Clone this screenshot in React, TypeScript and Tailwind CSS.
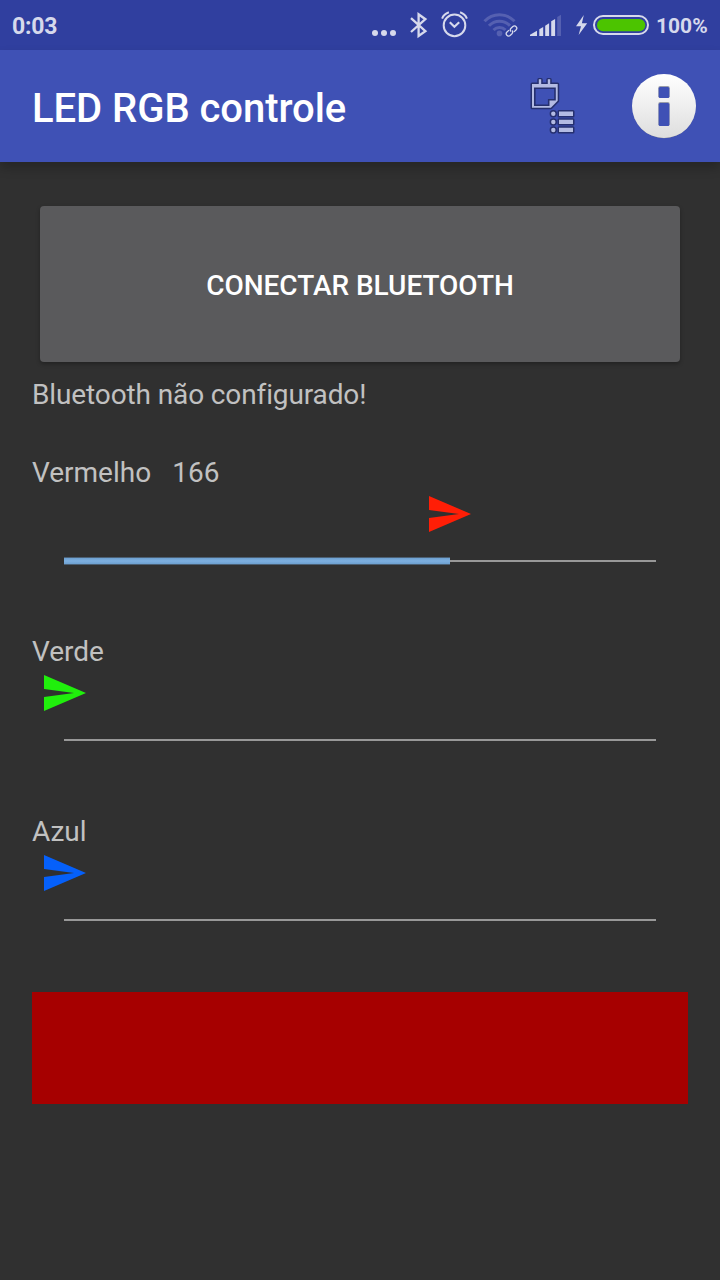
const BAR_ICON = '#d6d9ec';

function Dots() {
  return (
    <svg width="26" height="50" viewBox="371 0 26 50" fill={BAR_ICON}>
      <circle cx="375" cy="33" r="3" />
      <circle cx="384" cy="33" r="3" />
      <circle cx="393" cy="33" r="3" />
    </svg>
  );
}

function Bluetooth() {
  return (
    <svg width="18" height="50" viewBox="410 0 18 50" fill="none" stroke={BAR_ICON} strokeWidth="2.3">
      <path d="M411 18.2L425.4 31.2L418.6 36V14.2L425.4 19.2L411 32" />
    </svg>
  );
}

function Alarm() {
  return (
    <svg width="28" height="50" viewBox="441 0 28 50" fill="none" stroke={BAR_ICON}>
      <circle cx="454.5" cy="25.4" r="10.8" strokeWidth="2" />
      <path d="M449.8 22.2L454.4 26.8L459.2 22.2" strokeWidth="2.1" />
      <path d="M442.1 18.6Q443.8 14.1 448.9 12.3M466.9 18.6Q465.2 14.1 460.1 12.3" strokeWidth="2" />
    </svg>
  );
}

function Wifi() {
  return (
    <svg width="35" height="50" viewBox="483 0 35 50" fill="none">
      <g stroke="#5560b1" strokeWidth="3">
        <path d="M484.5 21.3A20.5 20.5 0 0 1 514.5 21.3" />
        <path d="M489 25.8A14.2 14.2 0 0 1 510 25.8" />
        <path d="M493.5 30A8.4 8.4 0 0 1 505.5 30" />
      </g>
      <circle cx="499.5" cy="33.4" r="2.8" fill="#5560b1" />
      <g transform="translate(511.5 31) rotate(-43)" stroke="#303f9f" strokeWidth="4">
        <rect x="-6.3" y="-2.1" width="12.6" height="4.2" rx="2.1" />
      </g>
      <g transform="translate(511.5 31) rotate(-43)" stroke={BAR_ICON} strokeWidth="1.3">
        <path d="M-1.2 -2.3H-4A2.3 2.3 0 0 0 -4 2.3H-1.5A2.3 2.3 0 0 0 .7 0" />
        <path d="M1.2 2.3H4A2.3 2.3 0 0 0 4 -2.3H1.5A2.3 2.3 0 0 0 -.7 0" />
      </g>
    </svg>
  );
}

function Signal() {
  return (
    <svg width="32" height="50" viewBox="530 0 32 50" fill={BAR_ICON}>
      <path d="M530 36V34.7L537 30.7V36ZM539.3 36V29.3L543.2 27V36ZM545.2 36V25.7L549.1 23.3V36ZM551.2 36V21.3L555.1 19V36Z" />
      <path d="M557.2 36V17L561 14.8V36Z" fill="#5560b1" />
    </svg>
  );
}

function Battery() {
  return (
    <svg width="74" height="50" viewBox="576 0 74 50">
      <path d="M583.8 15L576 26.3H581L578.6 35L587.2 23.3H581.9Z" fill={BAR_ICON} />
      <rect x="594" y="16" width="54" height="18" rx="9" fill="none" stroke={BAR_ICON} strokeWidth="2" />
      <rect x="597" y="19" width="48.3" height="12.3" rx="6.15" fill="#4cc400" />
    </svg>
  );
}

function NotesList() {
  return (
    <svg width="48" height="60" viewBox="528 76 48 60">
      <g fill="#26306f" stroke="#26306f" strokeWidth="3" strokeLinejoin="round">
        <path d="M532 84H557.7V101L551 107.7H532Z" />
        <path d="M538.8 79.5H541.2V85H538.8ZM547.8 79.5H550.2V85H547.8Z" />
        <circle cx="553.3" cy="113.8" r="2.2" />
        <circle cx="553.3" cy="122" r="2.2" />
        <circle cx="553.3" cy="130" r="2.2" />
        <path d="M559 111.5H573V116H559ZM559 119.7H573V124.1H559ZM559 127.7H573V132.1H559Z" />
      </g>
      <g fill="#b3bbe3">
        <path d="M532 84H538.8V79.2H541.2V84H547.8V79.2H550.2V84H557.7V100.8L550.9 107.7H532Z" />
        <circle cx="553.3" cy="113.8" r="2.2" />
        <circle cx="553.3" cy="122" r="2.2" />
        <circle cx="553.3" cy="130" r="2.2" />
        <path d="M559 111.5H573V116H559ZM559 119.7H573V124.1H559ZM559 127.7H573V132.1H559Z" />
      </g>
      <path d="M534.8 88.3H555V99.7H548.7V105.2H534.8Z" fill="#3f51b5" stroke="#26306f" strokeWidth="1.6" />
    </svg>
  );
}

function Info() {
  return (
    <svg width="64" height="66" viewBox="0 0 64 66">
      <defs>
        <linearGradient id="disc" x1="0" y1="0" x2="0" y2="1">
          <stop offset="0" stopColor="#ffffff" />
          <stop offset="1" stopColor="#dedede" />
        </linearGradient>
      </defs>
      <circle cx="32" cy="32.7" r="31.5" fill="#85878c" />
      <circle cx="32" cy="32" r="32" fill="url(#disc)" />
      <rect x="26.3" y="12" width="11.4" height="12" rx="1.8" fill="#999da9" />
      <rect x="26.3" y="28" width="11.4" height="24" rx="1.8" fill="#999da9" />
      <rect x="26.7" y="13" width="10.6" height="11" rx="1.5" fill="#3f51b5" />
      <rect x="26.7" y="29" width="10.6" height="23" rx="1.5" fill="#3f51b5" />
    </svg>
  );
}

type ChannelProps = { label: string; value: number; color: string };

function Channel({ label, value, color }: ChannelProps) {
  const ratio = value / 255;
  return (
    <section className="h-[111px]">
      <div className="flex h-[38px] gap-[21px] text-[28px] leading-[38px]">
        <span>{label}</span>
        {value > 0 && <span>{value}</span>}
      </div>
      <div className="mt-1 h-[36px] pl-3">
        <svg width="42" height="36" viewBox="0 0 42 36" style={{ marginLeft: Math.round(ratio * 592) }}>
          <path d="M0 0L42 18L0 36V22L30 18L0 14Z" fill={color} />
        </svg>
      </div>
      <div className="mx-8 mt-[25px] flex h-2 items-center">
        {value > 0 && (
          <div
            className="h-2 border-y border-[#4b6075] bg-linear-to-b from-[#6da0d0] via-[#7eb0e1] to-[#6da0d0]"
            style={{ width: Math.round(ratio * 592) + 1 }}
          />
        )}
        <div className="h-0.5 flex-1 bg-[#989898]" />
      </div>
    </section>
  );
}

export default function App() {
  return (
    <main className="flex h-[1280px] w-[720px] flex-col overflow-hidden bg-[#303030] font-['Roboto',sans-serif] text-[#c1c1c1]">
      <div className="flex h-[50px] shrink-0 items-center bg-[#303f9f] pl-3 text-[#d6d9ec]">
        <span className="mt-[3px] w-[359px] text-[23px] font-bold leading-none tracking-[-0.2px]">0:03</span>
        <Dots />
        <div className="ml-[13px]"><Bluetooth /></div>
        <div className="ml-[13px]"><Alarm /></div>
        <div className="ml-[14px]"><Wifi /></div>
        <div className="ml-3"><Signal /></div>
        <div className="ml-[14px]"><Battery /></div>
        <span className="ml-[6px] mt-[3px] text-[21px] font-bold leading-none">100%</span>
      </div>
      <header className="z-10 flex h-28 shrink-0 items-center bg-[#3f51b5] pl-8 shadow-[0_6px_10px_rgba(0,0,0,0.22)]">
        <h1 className="mt-1.5 w-[496px] text-[40px] font-medium leading-none tracking-[-0.05px] text-white">LED RGB controle</h1>
        <NotesList />
        <div className="ml-14 mt-px"><Info /></div>
      </header>
      <div className="flex flex-col px-8 pt-11">
        <button className="mx-2 h-[156px] rounded bg-[#5a5a5c] pt-1 text-[28px] font-medium tracking-[-0.03px] text-white shadow-[0_2px_4px_rgba(0,0,0,0.3)]">
          CONECTAR BLUETOOTH
        </button>
        <p className="mt-[14px] h-[38px] text-[28px] leading-[38px] tracking-[-0.12px]">Bluetooth não configurado!</p>
        <div className="mt-10"><Channel label="Vermelho" value={166} color="#ff1e06" /></div>
        <div className="mt-[68px]"><Channel label="Verde" value={0} color="#20ef0c" /></div>
        <div className="mt-[69px]"><Channel label="Azul" value={0} color="#0560fa" /></div>
        <div className="mt-[68px] h-28 bg-[#a60000]" />
      </div>
    </main>
  );
}
